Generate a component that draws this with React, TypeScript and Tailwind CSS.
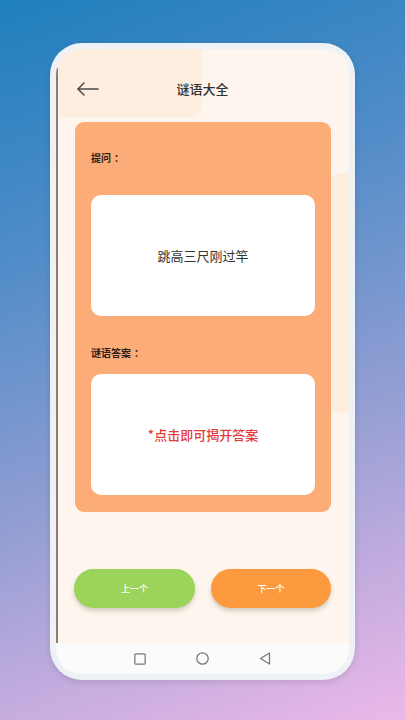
import React from "react";

export default function App() {
  const font = { fontFamily: '"Noto Sans CJK SC", "Noto Sans", sans-serif' };
  return (
    <div
      className="w-full h-[720px] flex justify-center pt-[43px] bg-[linear-gradient(160deg,#1f7fbd_0%,#4f8cc8_30%,#8f9dd2_60%,#c4acdf_82%,#ecb8e9_100%)]"
      style={font}
    >
      <div className="w-[305px] h-[637px] rounded-[32px] bg-[#eef2f7] p-[6px] shadow-[0_2px_6px_rgba(0,0,0,0.12)]">
        <div className="relative w-full h-full rounded-[26px] overflow-hidden bg-[#fef6ee] flex flex-col">
          {/* decorative blobs */}
          <div className="absolute left-0 top-0 w-[146px] h-[68px] rounded-br-[12px] bg-[#fdeedf]" />
          <div className="absolute right-0 top-[124px] w-[30px] h-[240px] rounded-l-[24px] bg-[#fdeee0]" />
          {/* left thin line */}
          <div className="absolute left-0 top-[19px] bottom-[26px] w-[2px] bg-[#8c7c72]" />

          {/* header */}
          <div className="relative pt-[28px] h-[52px] flex items-center">
            <div className="relative w-full h-[24px] flex items-center justify-center">
              <svg
                className="absolute left-[20px] top-[5px]"
                width="24"
                height="14"
                viewBox="0 0 24 14"
                fill="none"
                stroke="#4a4a4a"
                strokeWidth="1.5"
                strokeLinecap="round"
                strokeLinejoin="round"
              >
                <path d="M22 7H2" />
                <path d="M8 1L2 7l6 6" />
              </svg>
              <span className="text-[13px] leading-[24px] font-medium text-[#333333]">谜语大全</span>
            </div>
          </div>

          {/* card */}
          <div className="relative mt-[21px] ml-[19px] w-[256px] rounded-[9px] bg-[#fcad77] pt-[29px] px-[16px] pb-[17px]">
            <div className="h-[14px] leading-[14px] text-[10px] font-bold text-[#2e2018]">
              提问<span className="ml-[3px]">：</span>
            </div>
            <div className="mt-[30px] h-[121px] rounded-[10px] bg-white flex items-center justify-center">
              <span className="text-[13px] text-[#333333]">跳高三尺刚过竿</span>
            </div>
            <div className="mt-[30px] h-[14px] leading-[14px] text-[10px] font-bold text-[#2e2018]">
              谜语答案<span className="ml-[3px]">：</span>
            </div>
            <div className="mt-[14px] h-[121px] rounded-[10px] bg-white flex items-center justify-center">
              <span className="text-[13px] font-medium text-[#e53a3a]">*点击即可揭开答案</span>
            </div>
          </div>

          {/* buttons */}
          <div className="relative mt-[57px] ml-[18px] flex gap-[16px]">
            <div className="w-[121px] h-[39px] rounded-full bg-[#9cd35a] flex items-center justify-center shadow-[0_3px_4px_rgba(90,80,60,0.25)]">
              <span className="text-[9px] font-medium text-white">上一个</span>
            </div>
            <div className="w-[120px] h-[39px] rounded-full bg-[#fd9a3f] flex items-center justify-center shadow-[0_3px_4px_rgba(90,80,60,0.25)]">
              <span className="text-[9px] font-medium text-white">下一个</span>
            </div>
          </div>

          <div className="flex-1" />

          {/* nav bar */}
          <div className="relative h-[31px] bg-[#fbfbfc] flex items-center justify-center gap-[50px]">
            <svg width="12" height="12" viewBox="0 0 12 12" fill="none" stroke="#7a7a7a" strokeWidth="1.3">
              <rect x="0.8" y="0.8" width="10.4" height="10.4" rx="1" />
            </svg>
            <svg width="13" height="13" viewBox="0 0 13 13" fill="none" stroke="#7a7a7a" strokeWidth="1.3">
              <circle cx="6.5" cy="6.5" r="5.7" />
            </svg>
            <svg width="12" height="13" viewBox="0 0 12 13" fill="none" stroke="#7a7a7a" strokeWidth="1.3" strokeLinejoin="round">
              <path d="M10.5 1L1.5 6.5l9 5.5z" />
            </svg>
          </div>
        </div>
      </div>
    </div>
  );
}
